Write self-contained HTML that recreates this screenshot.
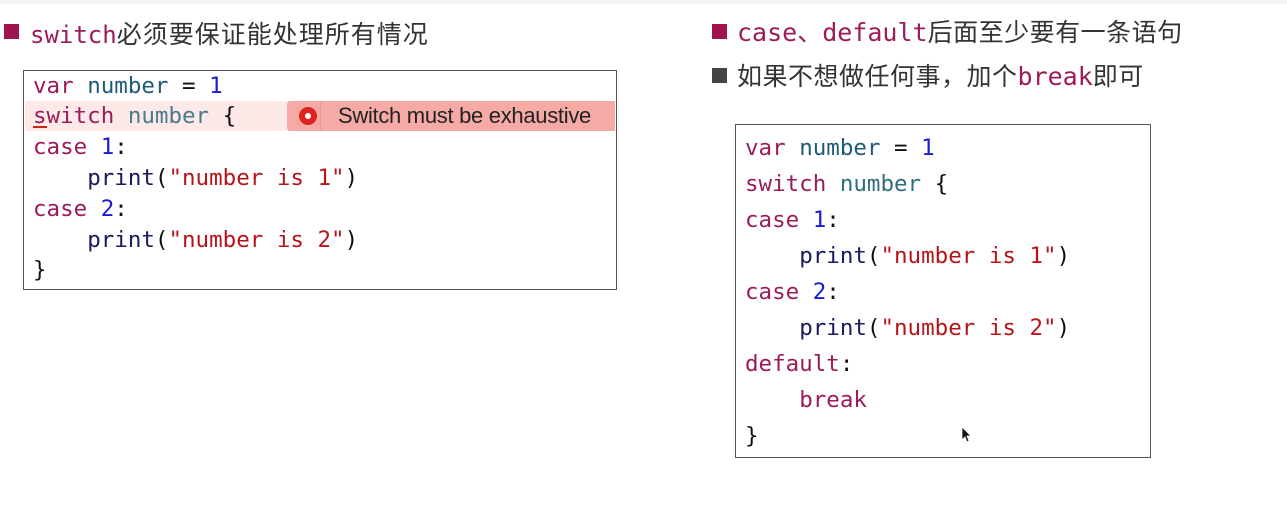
<!DOCTYPE html>
<html><head><meta charset="utf-8"><style>
body{margin:0;width:1287px;height:511px;background:#fff;position:relative;overflow:hidden;font-family:"DejaVu Sans Mono","Liberation Mono",monospace}
.topbar{position:absolute;left:0;top:0;width:1287px;height:4px;background:#f4f5f7}
.l{position:absolute;white-space:pre;font-size:22.5px;line-height:30px;color:#111}
.k{color:#9b1b5b}.n{color:#1f5a7a}.d{color:#1a1ad0}.s{color:#b5151a}.f{color:#1a1a5e}
.box{position:absolute;border:1.5px solid #555;background:#fff}
.h{position:absolute;white-space:nowrap;font-family:"Liberation Sans","Noto Sans CJK SC",sans-serif;color:#333}
.h .m{font-family:"DejaVu Sans Mono",monospace;color:#9b1b5b}
.sq{position:absolute;width:15px;height:15px}
</style></head><body>
<div class="topbar"></div>
<div class="sq" style="left:4px;top:24px;background:#a0134e"></div>
<div class="h" style="left:30px;top:15px;font-size:25px;letter-spacing:1px"><span class="m" style="font-size:24px;letter-spacing:0">switch</span>必须要保证能处理所有情况</div>
<div class="sq" style="left:712px;top:24px;background:#a0134e"></div>
<div class="h" style="left:737px;top:13px;font-size:25px;letter-spacing:0.5px"><span class="m" style="font-size:25px;letter-spacing:0">case、default</span>后面至少要有一条语句</div>
<div class="sq" style="left:712px;top:68px;background:#444"></div>
<div class="h" style="left:737px;top:57px;font-size:25px;letter-spacing:0.5px">如果不想做任何事，加个<span class="m" style="font-size:25px;letter-spacing:0">break</span>即可</div>

<div class="box" style="left:23px;top:70px;width:592px;height:218px"></div>
<div style="position:absolute;left:25px;top:101px;width:262px;height:30px;background:#fde9e8"></div>
<div style="position:absolute;left:287px;top:101px;width:328px;height:30px;background:#f5aaa6;border-radius:3px 0 0 3px"></div>
<div style="position:absolute;left:320px;top:101px;width:1px;height:30px;background:#e99"></div>
<div style="position:absolute;left:299px;top:107px;width:18px;height:18px;border-radius:50%;background:#e0231c"></div>
<div style="position:absolute;left:305px;top:113px;width:6px;height:6px;border-radius:50%;background:#fff"></div>
<div class="h" style="left:338px;top:103px;font-size:22px;color:#222;letter-spacing:-0.3px">Switch must be exhaustive</div>
<div style="position:absolute;left:33px;top:126px;width:14px;height:2px;background:#d0201a"></div>
<div class="l" style="left:33px;top:71px"><span class="k">var</span> <span class="n">number</span> = <span class="d">1</span></div>
<div class="l" style="left:33px;top:101px"><span class="k">switch</span> <span class="n" style="color:#4a7a8a">number</span> {</div>
<div class="l" style="left:33px;top:132px"><span class="k">case</span> <span class="d">1</span>:</div>
<div class="l" style="left:33px;top:163px">    <span class="f">print</span>(<span class="s">"number is 1"</span>)</div>
<div class="l" style="left:33px;top:194px"><span class="k">case</span> <span class="d">2</span>:</div>
<div class="l" style="left:33px;top:225px">    <span class="f">print</span>(<span class="s">"number is 2"</span>)</div>
<div class="l" style="left:33px;top:255px">}</div>

<div class="box" style="left:735px;top:124px;width:414px;height:332px"></div>
<div class="l" style="left:745px;top:133px"><span class="k">var</span> <span class="n">number</span> = <span class="d">1</span></div>
<div class="l" style="left:745px;top:169px"><span class="k">switch</span> <span class="n" style="color:#2e6e7e">number</span> {</div>
<div class="l" style="left:745px;top:205px"><span class="k">case</span> <span class="d">1</span>:</div>
<div class="l" style="left:745px;top:241px">    <span class="f">print</span>(<span class="s">"number is 1"</span>)</div>
<div class="l" style="left:745px;top:277px"><span class="k">case</span> <span class="d">2</span>:</div>
<div class="l" style="left:745px;top:313px">    <span class="f">print</span>(<span class="s">"number is 2"</span>)</div>
<div class="l" style="left:745px;top:349px"><span class="k">default</span>:</div>
<div class="l" style="left:745px;top:385px">    <span class="k">break</span></div>
<div class="l" style="left:745px;top:421px">}</div>
<svg style="position:absolute;left:960px;top:426px" width="12" height="18"><path d="M2 1 L2 14 L5 11 L7 16 L9 15 L7 10 L11 10 Z" fill="#111" stroke="#fff" stroke-width="0.8"/></svg>
</body></html>
